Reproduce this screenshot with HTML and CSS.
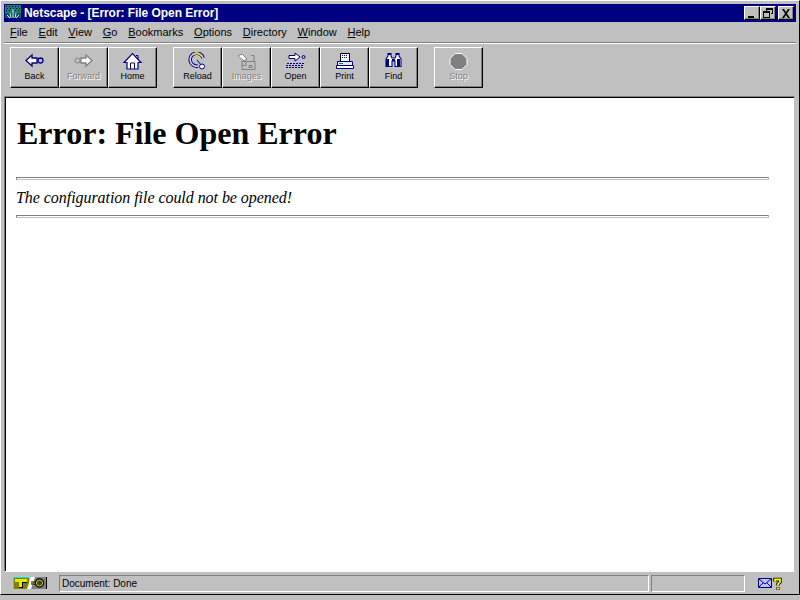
FILE: index.html
```html
<!DOCTYPE html>
<html lang="en">
<head>
  <meta charset="UTF-8" />
  <title>Netscape - [Error: File Open Error]</title>
  <link rel="stylesheet" href="styles.css">
</head>
<body>
  <div class="window">
    <div class="titlebar">
      <svg class="app-icon" width="16" height="16" viewBox="0 0 16 16">
        <rect width="16" height="16" fill="#0a5a5a"/>
        <path d="M0 0h16v8H0z" fill="#1c7c7c"/>
        <path d="M1 1h1v1H1zM4 1h1v1H4zM7 1h1v1H7zM10 1h1v1h-1zM13 1h1v1h-1zM2 3h1v1H2zM5 3h1v1H5zM8 3h1v1H8zM11 3h1v1h-1zM14 3h1v1h-1zM1 5h1v1H1zM4 5h1v1H4zM10 5h1v1h-1zM13 5h1v1h-1z" fill="#000"/>
        <path d="M0 13h16v3H0z" fill="#000080"/>
        <path d="M8 4v9M2 10l3 3M14 10l-3 3M5 8l1 5M11 8l-1 5" stroke="#c8e0f0" stroke-width="1" fill="none"/>
      </svg>
      <span class="title-text">Netscape - [Error: File Open Error]</span>
      <div class="win-buttons">
        <button class="win-btn"><svg width="10" height="9" viewBox="0 0 10 9"><path d="M1 7h6v2H1z"/></svg></button>
        <button class="win-btn"><svg width="10" height="10" viewBox="0 0 10 10"><path d="M3 0h7v6H8v-1h1V2H4v1H3zM0 3h7v7H0zM1 5v4h5V5z" fill-rule="evenodd"/></svg></button>
        <button class="win-btn close"><svg width="10" height="9" viewBox="0 0 10 9"><path d="M1 0h2l2 3 2-3h2L6 4.500 9 9H7L5 6 3 9H1l3-4.500z"/></svg></button>
      </div>
    </div>

    <div class="menubar">
      <span class="menu-item"><u>F</u>ile</span>
      <span class="menu-item"><u>E</u>dit</span>
      <span class="menu-item"><u>V</u>iew</span>
      <span class="menu-item"><u>G</u>o</span>
      <span class="menu-item"><u>B</u>ookmarks</span>
      <span class="menu-item"><u>O</u>ptions</span>
      <span class="menu-item"><u>D</u>irectory</span>
      <span class="menu-item"><u>W</u>indow</span>
      <span class="menu-item"><u>H</u>elp</span>
    </div>

    <div class="toolbar">
      <div class="tool-group">
        <div class="tool">
          <svg width="25" height="20" viewBox="0 0 25 20"><path d="M4 8.500l6-5.500v3h5v5h-5v3z" fill="#fff" stroke="#000080" stroke-width="1.300"/><circle cx="18.500" cy="8.500" r="2.500" fill="#c0c0c0" stroke="#000080" stroke-width="1.300"/></svg>
          <span>Back</span>
        </div>
        <div class="tool off">
          <svg width="25" height="20" viewBox="0 0 25 20"><circle cx="6.500" cy="8.500" r="2.500" fill="#c0c0c0" stroke="#808080"/><path d="M21 8.500l-6-5.500v3h-5v5h5v3z" fill="#fff" stroke="#808080" stroke-width="1.300"/></svg>
          <span>Forward</span>
        </div>
        <div class="tool">
          <svg width="25" height="20" viewBox="0 0 25 20"><path d="M4 10.500L12.500 1.500l8.500 9h-3v6.500H7v-6.500z" fill="#fff" stroke="#000080" stroke-width="1.200"/><path d="M10.500 17v-6h4v6M16 3.500h2v4" fill="none" stroke="#000080"/></svg>
          <span>Home</span>
        </div>
      </div>
      <div class="tool-group">
        <div class="tool">
          <svg width="25" height="20" viewBox="0 0 25 20"><path d="M13 14a6.500 6.500 0 1 1 5-8" fill="none" stroke="#000080" stroke-width="3.500"/><path d="M13 14a6.500 6.500 0 1 1 5-8" fill="none" stroke="#d8d8ff" stroke-width="1.500"/><path d="M8 2.500a6.500 6.500 0 0 1 9 2" fill="none" stroke="#e8d020" stroke-width="2"/><path d="M12 8l5 6" stroke="#000080" fill="none"/><circle cx="17" cy="14.500" r="2.500" fill="#fff" stroke="#000080"/></svg>
          <span>Reload</span>
        </div>
        <div class="tool off">
          <svg width="25" height="20" viewBox="0 0 25 20"><path d="M4 4l4-2 5 5-3 2z" fill="#fff" stroke="#808080"/><path d="M8 9.500h13v8H8z" fill="#c0c0c0" stroke="#808080"/><path d="M12 9.500v4H8M17 3.500h3v6M15 13.500h3v2h-3z" fill="none" stroke="#808080"/></svg>
          <span>Images</span>
        </div>
        <div class="tool">
          <svg width="25" height="20" viewBox="0 0 25 20"><path d="M6 3.500h6V1l5 4-5 4V6.500H6z" fill="#fff" stroke="#000080"/><circle cx="20.500" cy="5" r="1.500" fill="#c0c0c0" stroke="#000080"/><path d="M4 11.500h18M3 13.500h18M3 15.500h18" stroke="#000080" stroke-width="1" stroke-dasharray="2 1" fill="none"/></svg>
          <span>Open</span>
        </div>
        <div class="tool">
          <svg width="25" height="20" viewBox="0 0 25 20"><path d="M8.500 1.500h9v8h-9z" fill="#fff" stroke="#000"/><path d="M10 3h1v1h-1zM12 3h1v1h-1zM14 3h1v1h-1zM10 5h1v1h-1zM12 5h1v1h-1zM14 5h1v1h-1z" fill="#000080"/><path d="M5.500 9.500h15v4h-15z" fill="#e8e8e8" stroke="#000080"/><path d="M4.500 13.500h17v3h-17z" fill="#fff" stroke="#000080"/><path d="M7 11.500h4" stroke="#008080"/></svg>
          <span>Print</span>
        </div>
        <div class="tool">
          <svg width="25" height="20" viewBox="0 0 25 20"><path d="M5 14.500V7l2-3V1.500h3V4l1 2h3l1-2V1.500h3V4l2 3v7.500h-6V9h-3v5.500z" fill="#fff" stroke="#000080" stroke-width="1.100"/><path d="M5 7h3v7H5zM16 7h3v7h-3zM7 1h3v2H7zM15 1h3v2h-3z" fill="#000080"/><path d="M11 7h3v2h-3z" fill="#000080"/></svg>
          <span>Find</span>
        </div>
      </div>
      <div class="tool-group">
        <div class="tool off">
          <svg width="25" height="20" viewBox="0 0 25 20"><path d="M9 1.500h7l5 5v6l-5 5H9l-5-5v-6z" fill="#808080" stroke="#fff" stroke-width="1"/></svg>
          <span>Stop</span>
        </div>
      </div>
    </div>

    <div class="page">
      <h1>Error: File Open Error</h1>
      <hr>
      <p class="message"><em>The configuration file could not be opened!</em></p>
      <hr>
    </div>

    <div class="statusbar">
      <div class="security">
        <svg width="34" height="12" viewBox="0 0 34 12">
          <path d="M0 0h16v12H0z" fill="#00e8e8"/>
          <path d="M1 1h15v11H1z" fill="#808000"/>
          <path d="M2 2h12v3H9v5H6V5H2z" fill="#e8e800"/>
          <path d="M9 5h5v1H10v5H6v-1h3z" fill="#000"/>
          <path d="M15 12l4-12h15v12z" fill="#808080"/>
          <path d="M14 12l4-12h4l-4 12z" fill="#fff"/>
          <path d="M18 6h5" stroke="#000" stroke-width="3"/>
          <path d="M18 6h5" stroke="#f0f000"/>
          <circle cx="26.500" cy="6" r="3.500" fill="#404040" stroke="#000" stroke-width="2.500"/>
          <circle cx="26.500" cy="6" r="3" fill="none" stroke="#f0f000"/>
          <path d="M0 11h33M33 0h1v12h-1z" stroke="none" fill="#000"/>
        </svg>
      </div>
      <div class="status-cell status-text">Document: Done</div>
      <div class="status-cell status-progress"></div>
      <div class="status-icons">
        <svg width="14" height="10" viewBox="0 0 14 10"><path d="M.5.500h13v9H.5z" fill="#c0c0ff" stroke="#000080"/><path d="M1 1l6 5 6-5M1 9l4-4M13 9L9 5" fill="none" stroke="#000080"/></svg>
        <svg width="10" height="13" viewBox="0 0 10 13"><path d="M2 4.500V2.500h5v2.500L5 7v1.500" fill="none" stroke="#000" stroke-width="3.500"/><path d="M3.500 10h3v3h-3z" fill="#000"/><path d="M2 4.500V2.500h5v2.500L5 7v1.500" fill="none" stroke="#ffff00" stroke-width="1.800"/><path d="M4 10.500h2v2H4z" fill="#ffff00"/></svg>
      </div>
    </div>
  </div>
</body>
</html>
```

FILE: styles.css
```css
html, body {
  margin: 0;
  height: 100%;
  overflow: hidden;
  background: #c0c0c0;
}

body {
  font-family: 'Liberation Sans', Arial, sans-serif;
  font-size: 12px;
  color: #000;
}

.window {
  height: 595px;
  box-sizing: border-box;
  padding: 3px 3px 0;
  background: #c0c0c0;
  border-top: 1px solid #fff;
  border-left: 1px solid #fff;
  border-right: 1px solid #000;
  border-bottom: 1px solid #000;
  display: flex;
  flex-direction: column;
}

.titlebar {
  height: 18px;
  flex: none;
  background: #000080;
  color: #fff;
  display: flex;
  align-items: center;
  padding: 0 2px 0 1px;
}

.app-icon {
  margin-right: 3px;
}

.title-text {
  font-weight: bold;
  font-size: 12px;
  letter-spacing: -0.05px;
  flex: 1;
}

.win-buttons {
  display: flex;
}

.win-btn {
  width: 16px;
  height: 14px;
  padding: 0;
  background: #c0c0c0;
  border: 1px solid;
  border-color: #fff #000 #000 #fff;
  box-shadow: inset -1px -1px 0 #808080;
  display: flex;
  align-items: center;
  justify-content: center;
}

.win-btn.close {
  margin-left: 2px;
}

.menubar {
  height: 21px;
  box-sizing: border-box;
  flex: none;
  display: flex;
  align-items: center;
  gap: 10.800px;
  padding-left: 6px;
  font-size: 11px;
  border-bottom: 1px solid #808080;
  box-shadow: 0 1px 0 #fff;
}

.toolbar {
  height: 53px;
  box-sizing: border-box;
  flex: none;
  display: flex;
  align-items: flex-start;
  gap: 16px;
  padding: 4px 0 0 6px;
}

.tool-group {
  display: flex;
  gap: 0;
}

.tool {
  width: 49px;
  height: 41px;
  box-sizing: border-box;
  border: 1px solid;
  border-color: #fff #000 #000 #fff;
  box-shadow: inset -1px -1px 0 #808080;
  display: flex;
  flex-direction: column;
  align-items: center;
  padding-top: 4px;
  font-size: 9px;
}

.tool svg {
  height: 20px;
  margin-bottom: -1px;
}

.tool.off span {
  color: #808080;
  text-shadow: 1px 1px 0 #fff;
}

.page {
  flex: 1;
  background: #fff;
  border-top: 1px solid #808080;
  border-left: 1px solid #808080;
  border-bottom: 1px solid #fff;
  border-right: 1px solid #c0c0c0;
  box-shadow: inset 1px 1px 0 #000;
  margin-right: 1px;
  padding: 1px 25px 0 11px;
  font-family: 'Liberation Serif', 'Times New Roman', serif;
}

.page h1 {
  font-size: 32px;
  font-weight: bold;
  margin: 17px 0 26px 1px;
  line-height: 36px;
}

.page hr {
  margin: 0;
  height: 3px;
  box-sizing: border-box;
  border: 1px solid;
  border-color: #808080 #c0c0c0 #c0c0c0 #808080;
  background: #fff;
}

.message {
  margin: 9px 0 8px;
  font-size: 16px;
  line-height: 18px;
  letter-spacing: -0.05px;
}

.statusbar {
  height: 22px;
  flex: none;
  display: flex;
  align-items: center;
  font-size: 10px;
}

.security {
  width: 55px;
  padding-left: 9px;
  box-sizing: border-box;
  display: flex;
}

.status-cell {
  height: 17px;
  box-sizing: border-box;
  border: 1px solid;
  border-color: #808080 #fff #fff #808080;
  line-height: 15px;
  padding-left: 2px;
}

.status-text {
  width: 590px;
}

.status-progress {
  width: 94px;
  margin-left: 2px;
}

.status-icons {
  display: flex;
  align-items: center;
  gap: 1px;
  margin-left: 13px;
}
```
